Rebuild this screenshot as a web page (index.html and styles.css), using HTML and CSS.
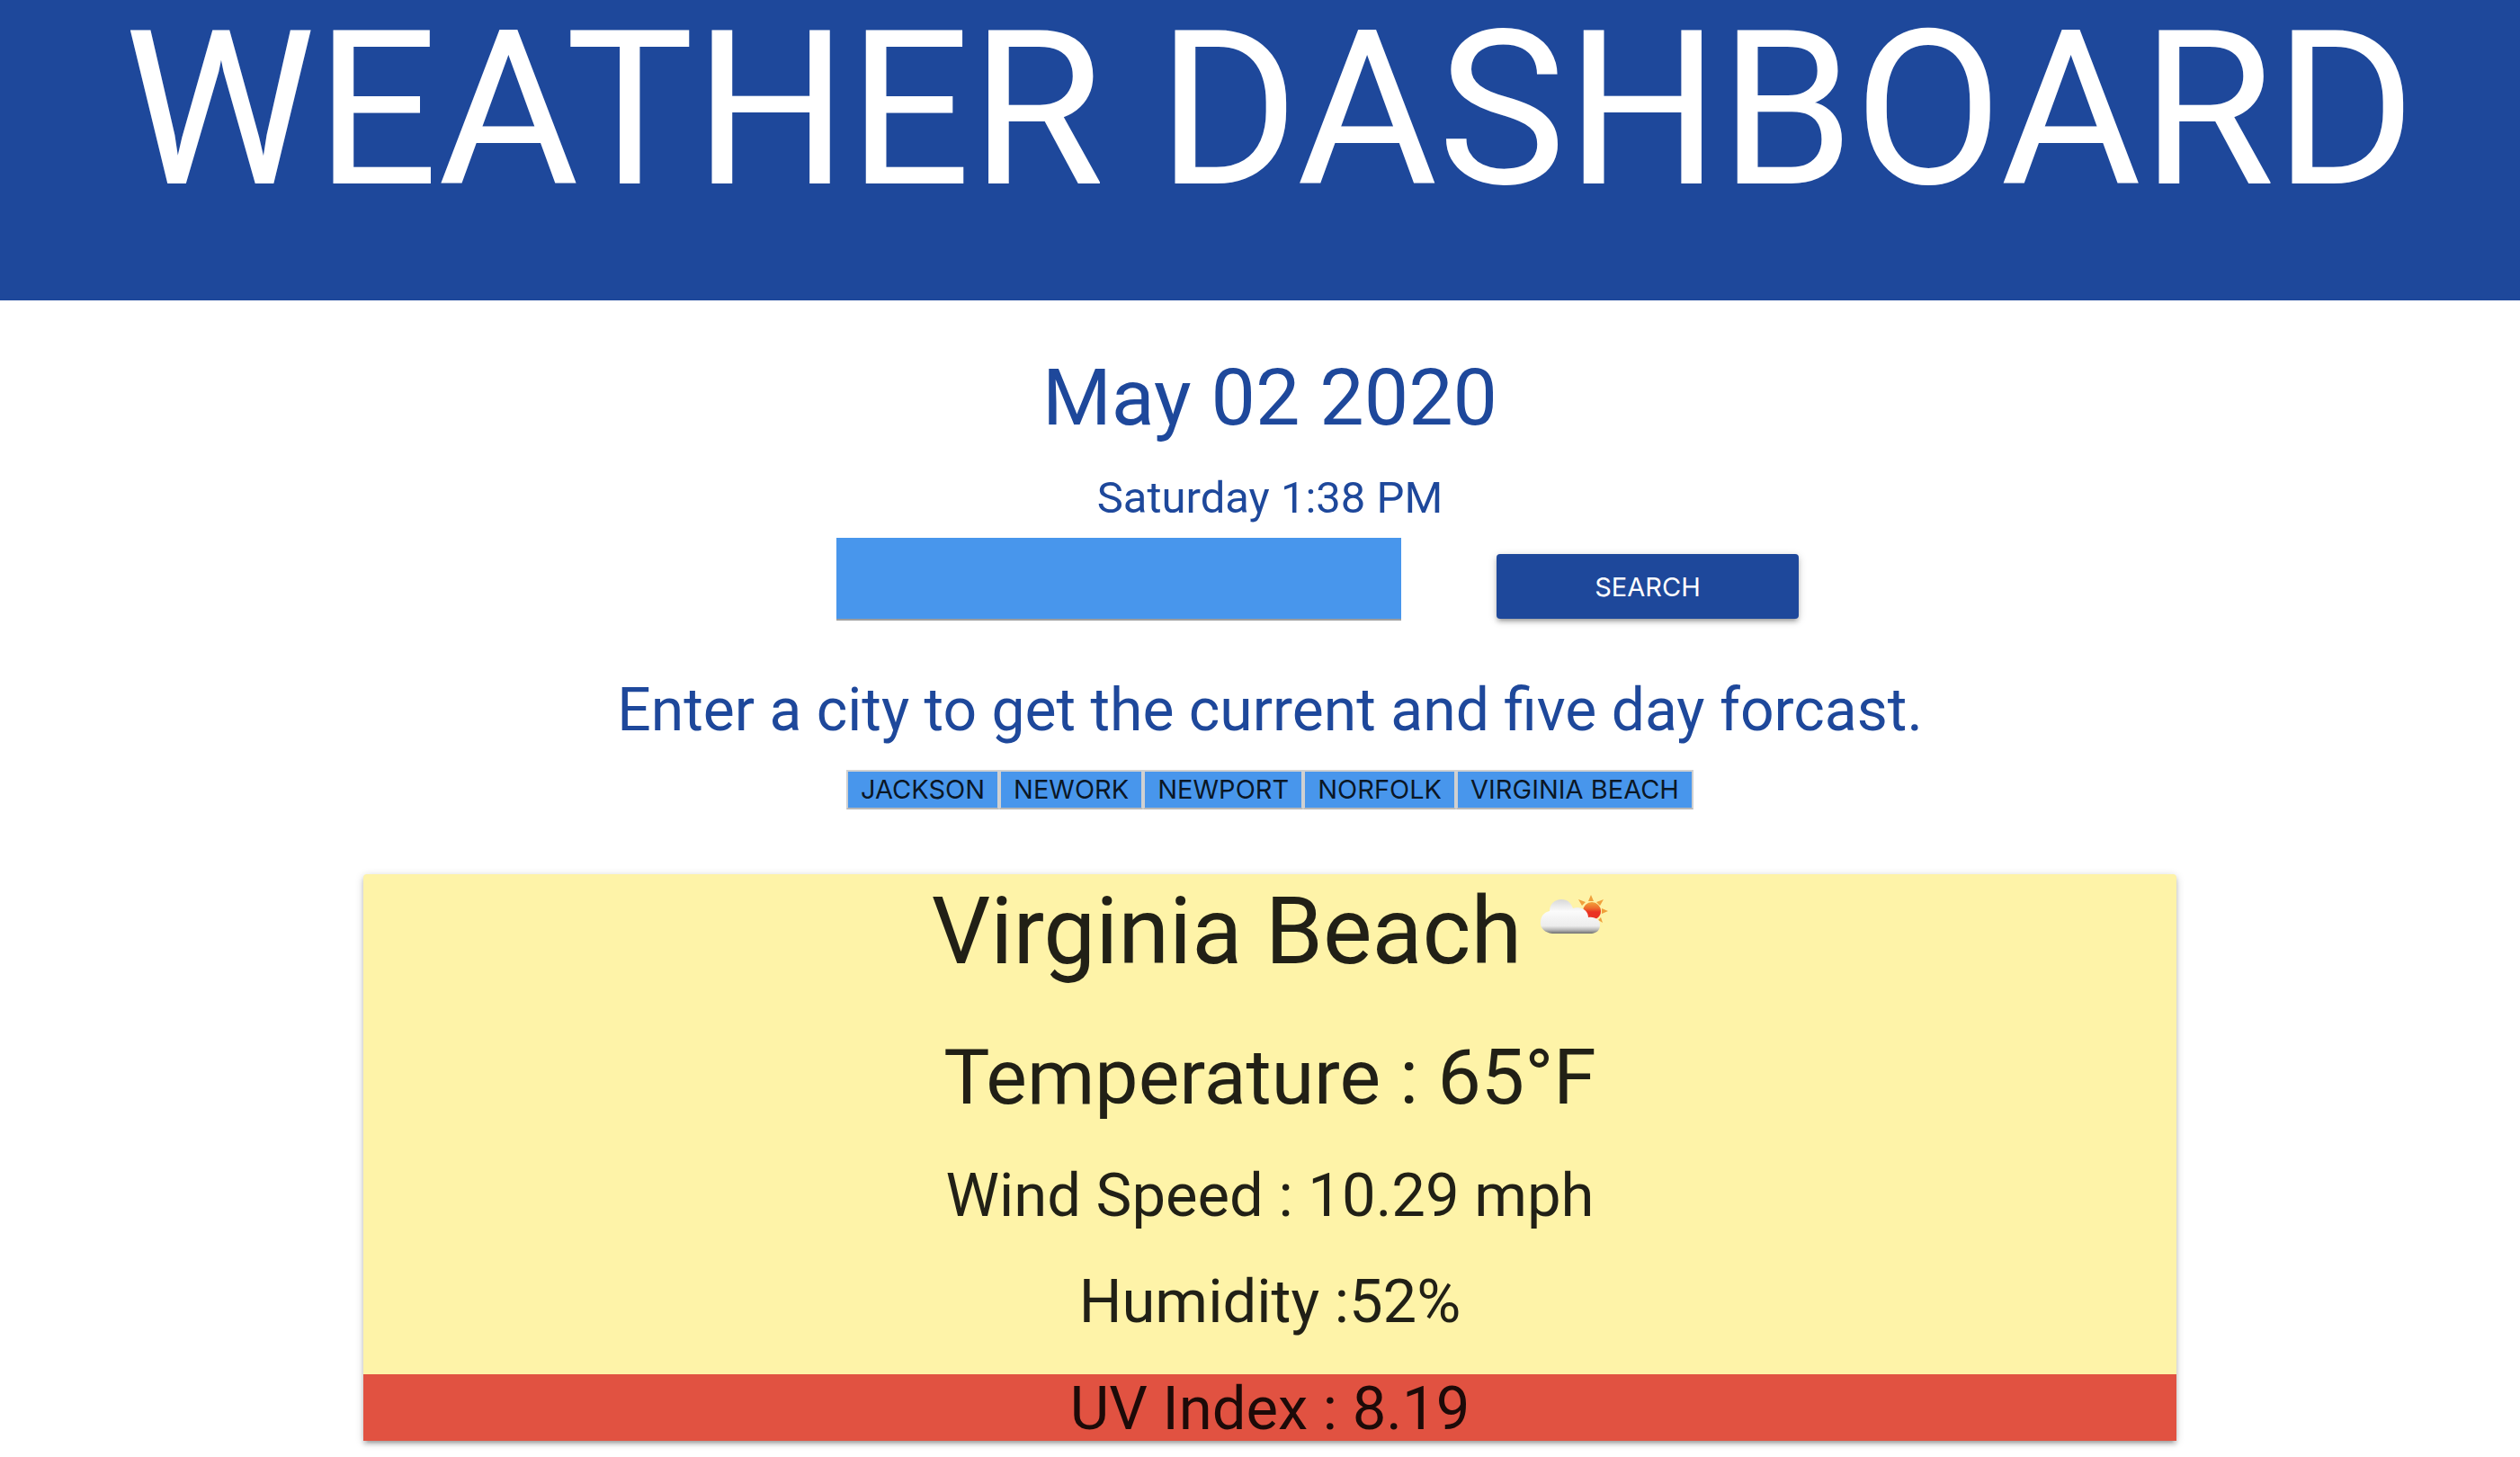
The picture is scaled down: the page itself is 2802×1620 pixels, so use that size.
FILE: index.html
```html
<!DOCTYPE html>
<html lang="en">
<head>
<meta charset="utf-8">
<title>Weather Dashboard</title>
<link rel="stylesheet" href="styles.css">
</head>
<body>
<header class="banner">
  <h1 class="banner-title">WEATHER DASHBOARD</h1>
</header>
<main class="content">
  <h2 class="date">May 02 2020</h2>
  <p class="time">Saturday 1:38 PM</p>
  <form class="search">
    <input class="search-input" type="text" aria-label="City">
    <button class="search-button" type="button">SEARCH</button>
  </form>
  <p class="hint">Enter a city to get the current and five day forcast.</p>
  <nav class="history" aria-label="Recent cities">
    <button class="city" type="button">JACKSON</button>
    <button class="city" type="button">NEWORK</button>
    <button class="city" type="button">NEWPORT</button>
    <button class="city" type="button">NORFOLK</button>
    <button class="city" type="button">VIRGINIA BEACH</button>
  </nav>
  <section class="card">
    <h2 class="card-title">Virginia Beach
      <svg class="weather-icon" viewBox="0 0 76 44" role="img" aria-label="Partly cloudy">
        <defs>
          <linearGradient id="cloud" x1="0" y1="0" x2="0" y2="1">
            <stop offset="0" stop-color="#d8d8d8"/>
            <stop offset=".35" stop-color="#fbfbfb"/>
            <stop offset=".78" stop-color="#ececec"/>
            <stop offset=".9" stop-color="#b4b4b4"/>
            <stop offset="1" stop-color="#6f6f6f"/>
          </linearGradient>
          <linearGradient id="sun" x1="0" y1="0" x2="0" y2="1">
            <stop offset="0" stop-color="#f2a23a"/>
            <stop offset=".35" stop-color="#ee6a2c"/>
            <stop offset=".55" stop-color="#ea3323"/>
          </linearGradient>
        </defs>
        <g fill="#f0a03c">
          <path d="M57 0l3 7h-6zM43 5l8 3-4 4zM71 5l-4 7-4-4zM76 18l-7 3v-6zM70 31l-5-3 3-3z"/>
        </g>
        <circle cx="58" cy="18" r="10" fill="url(#sun)"/>
        <path d="M14 43C5 42 0 36 1 30C1 24 5 19 11 18C11 10 17 5 24 5C31 5 35 9 37 15C45 12 54 17 54 25C62 24 67 28 67 33C67 39 64 42 58 43Z" fill="url(#cloud)"/>
      </svg>
    </h2>
    <p class="temperature">Temperature : 65°F</p>
    <p class="reading wind">Wind Speed : 10.29 mph</p>
    <p class="reading humidity">Humidity :52%</p>
    <p class="reading uv">UV Index : 8.19</p>
  </section>
</main>
</body>
</html>
```
FILE: styles.css
```css
* {
  box-sizing: border-box;
}

body {
  margin: 0;
  background: #fff;
  color: rgba(0, 0, 0, .87);
  font-family: Roboto, "Liberation Sans", sans-serif;
}

h1, h2, p {
  margin: 0;
  font-weight: 400;
  text-align: center;
}

.banner {
  padding: 0 0 90px 22px;
  background: #1e489b;
}

.banner-title {
  color: #fff;
  font-size: 240px;
  line-height: 244px;
  white-space: nowrap;
}

.content {
  display: flex;
  flex-direction: column;
  align-items: center;
  padding: 60px 0 18px 22px;
}

.date,
.time,
.hint {
  color: #1e489b;
}

.date {
  font-size: 88px;
  line-height: 96px;
}

.time {
  margin-top: 38px;
  font-size: 49px;
  line-height: 52px;
}

.search {
  display: flex;
  align-items: flex-end;
  gap: 106px;
  width: 42.3%;
  margin-top: 18px;
  padding-left: 106px;
}

.search-input {
  flex: 1;
  min-width: 0;
  height: 92px;
  padding: 0 16px;
  border: 0;
  border-bottom: 2px solid #9e9e9e;
  background: #4896ec;
  font: inherit;
  font-size: 32px;
}

.search-button {
  width: 336px;
  height: 72px;
  margin-bottom: 2px;
  border: 0;
  border-radius: 4px;
  background: #1e489b;
  box-shadow: 0 4px 4px rgba(0, 0, 0, .14), 0 6px 2px -4px rgba(0, 0, 0, .12), 0 2px 10px rgba(0, 0, 0, .2);
  color: #fff;
  font-family: Inter, "Liberation Sans", sans-serif;
  font-size: 29px;
}

.hint {
  margin-top: 60px;
  font-size: 66px;
  line-height: 80px;
}

.history {
  display: flex;
  margin-top: 26px;
}

.city {
  height: 44px;
  padding: 0 14px;
  border: 2px solid #d0d0d0;
  border-bottom-color: #b8b8b8;
  background: #4896ec;
  color: rgba(0, 0, 0, .87);
  font-family: Inter, "Liberation Sans", sans-serif;
  font-size: 29px;
  line-height: 36px;
}

.card {
  width: 72.5%;
  margin-top: 72px;
  border-radius: 4px 4px 0 0;
  background: #fef3a8;
  box-shadow: 0 4px 4px rgba(0, 0, 0, .14), 0 6px 2px -4px rgba(0, 0, 0, .12), 0 2px 10px rgba(0, 0, 0, .2);
}

.card-title {
  display: flex;
  justify-content: center;
  gap: 20px;
  font-size: 103px;
  line-height: 128px;
}

.weather-icon {
  width: 76px;
  height: 44px;
  margin-top: 23px;
}

.temperature {
  margin-top: 50px;
  font-size: 86px;
  line-height: 96px;
}

.reading {
  font-size: 67px;
  line-height: 74px;
}

.wind {
  margin-top: 46px;
}

.humidity {
  margin-top: 44px;
}

.uv {
  margin-top: 44px;
  padding-top: 2px;
  background: #e15241;
  line-height: 72px;
}
```
